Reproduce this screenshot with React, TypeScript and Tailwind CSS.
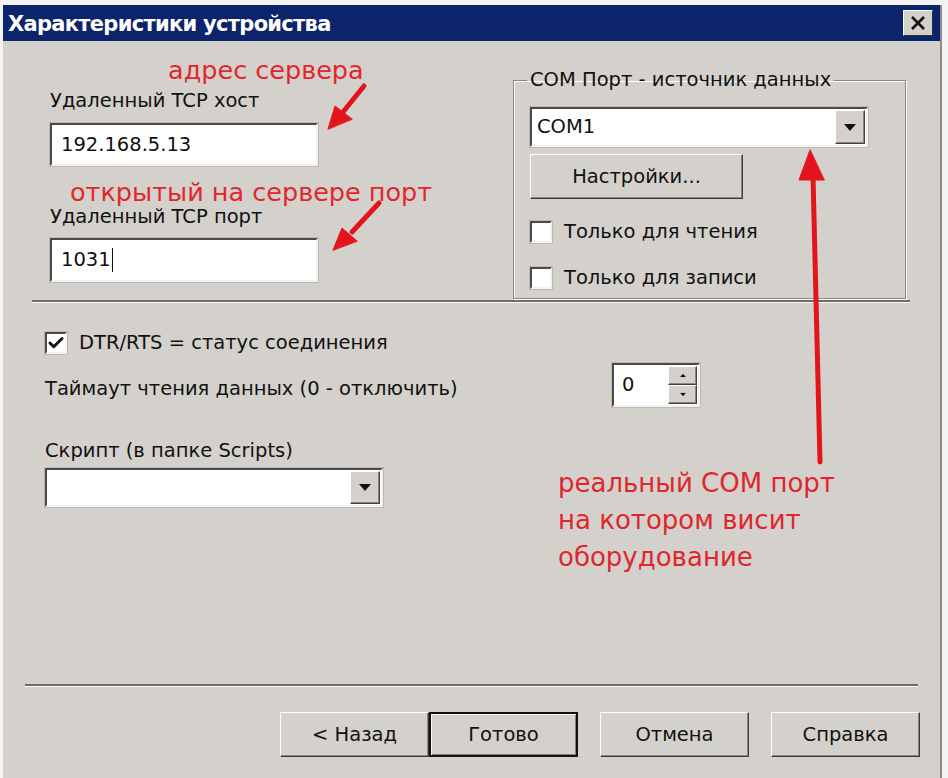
import { Check } from 'lucide-react'

const ui = { fontFamily: '"DejaVu Sans", Verdana, sans-serif' }

function Sunken({ className = '', children }: { className?: string; children?: React.ReactNode }) {
  return (
    <div
      className={`bg-white border-2 border-t-[#4a4a4a] border-l-[#4a4a4a] border-b-[#f2f2f2] border-r-[#f2f2f2] shadow-[0_0_0_1px_#bcb9b4] ${className}`}
    >
      {children}
    </div>
  )
}

function DropButton({ className = '' }: { className?: string }) {
  return (
    <div
      className={`bg-[#d4d1cc] border border-t-white border-l-white border-b-[#404040] border-r-[#404040] shadow-[inset_-1px_-1px_0_#8a8782] flex items-center justify-center ${className}`}
    >
      <svg width="12" height="7" viewBox="0 0 12 7">
        <path d="M0 0 H12 L6 7 Z" fill="#111" />
      </svg>
    </div>
  )
}

function Combo({ value, className = '' }: { value?: string; className?: string }) {
  return (
    <Sunken className={`flex items-stretch ${className}`}>
      <div className="flex-1 flex items-center pl-[5px] text-[19.5px] text-[#111]">{value}</div>
      <DropButton className="w-[30px] m-[1px]" />
    </Sunken>
  )
}

function Button({ label, focused = false, className = '' }: { label: string; focused?: boolean; className?: string }) {
  return (
    <div
      className={`bg-[#d4d1cc] flex items-center justify-center text-[19.5px] text-[#111] ${
        focused
          ? 'border-2 border-[#111] shadow-[inset_1px_1px_0_#fff,inset_-1px_-1px_0_#808080]'
          : 'border border-t-white border-l-white border-b-[#3a3a3a] border-r-[#3a3a3a] shadow-[inset_-1px_-1px_0_#8a8782]'
      } ${className}`}
    >
      {label}
    </div>
  )
}

function CheckBox({ checked = false, label }: { checked?: boolean; label: string }) {
  return (
    <div className="flex items-center h-[30px]">
      <Sunken className="w-[22px] h-[22px] flex items-center justify-center">
        {checked && <Check size={18} strokeWidth={4} className="text-[#111]" />}
      </Sunken>
      <span className="ml-[12px] text-[19.5px] text-[#111]">{label}</span>
    </div>
  )
}

function Separator({ className = '' }: { className?: string }) {
  return <div className={`h-[3px] border-t-2 border-[#6f6c68] border-b border-b-white ${className}`} />
}

export default function App() {
  return (
    <div className="w-[948px] h-[778px] bg-[#f4f3f1] pt-[5px] pl-[3px] overflow-hidden" style={ui}>
      <div className="relative w-[939px] h-[773px] bg-[#d4d1cc] flex flex-col border-r-2 border-[#8f8c88]">
        {/* Title bar */}
        <div className="h-[36px] bg-[#0c246b] flex items-center justify-between pl-[5px] pr-[7px]">
          <span className="pt-[3px] text-white font-bold text-[21px] tracking-[-0.7px]">Характеристики устройства</span>
          <div className="w-[30px] h-[26px] bg-[#d4d1cc] border border-t-white border-l-white border-b-[#303030] border-r-[#303030] flex items-center justify-center">
            <svg width="16" height="16" viewBox="0 0 16 16">
              <path d="M2 2 L14 14 M14 2 L2 14" stroke="#111" strokeWidth="2.6" />
            </svg>
          </div>
        </div>

        {/* Top section */}
        <div className="flex pl-[47px]">
          <div className="w-[268px] flex flex-col">
            <div className="mt-[11px] h-[36px] leading-[36px] ml-[118px] whitespace-nowrap text-[25.5px] text-[#e3262c]">
              адрес сервера
            </div>
            <div className="h-[26px] leading-[26px] text-[19.5px] text-[#111] whitespace-nowrap">Удаленный TCP хост</div>
            <Sunken className="mt-[9px] h-[43px] flex items-center pl-[9px] text-[19.5px] text-[#111]">192.168.5.13</Sunken>
            <div className="mt-[12px] h-[28px] leading-[28px] ml-[20px] whitespace-nowrap text-[25.5px] text-[#e3262c]">
              открытый на сервере порт
            </div>
            <div className="h-[22px] leading-[22px] text-[19.5px] text-[#111] whitespace-nowrap">Удаленный TCP порт</div>
            <Sunken className="mt-[10px] h-[44px] flex items-center pl-[9px] text-[19.5px] text-[#111]">
              1031<span className="ml-[1px] w-[1px] h-[24px] bg-[#111]" />
            </Sunken>
          </div>

          <fieldset className="ml-[195px] mt-[28px] w-[393px] h-[230px] border border-[#8a8782] shadow-[1px_1px_0_#fff,inset_1px_1px_0_#fff] px-[16px] pb-0">
            <legend className="ml-[-3px] px-[3px] h-[22px] leading-[22px] text-[19.5px] text-[#111]">COM Порт - источник данных</legend>
            <Combo value="COM1" className="mt-[16px] w-[338px] h-[40px]" />
            <Button label="Настройки..." className="mt-[7px] w-[213px] h-[45px]" />
            <div className="mt-[18px]">
              <CheckBox label="Только для чтения" />
            </div>
            <div className="mt-[16px]">
              <CheckBox label="Только для записи" />
            </div>
          </fieldset>
        </div>

        <Separator className="mt-[1px] ml-[29px] w-[878px]" />

        {/* Lower section */}
        <div className="pl-[42px] flex flex-col">
          <div className="mt-[25px]">
            <CheckBox checked label="DTR/RTS = статус соединения" />
          </div>
          <div className="mt-[5px] w-[655px] h-[44px] flex items-center justify-between">
            <span className="pt-[7px] text-[19.5px] text-[#111]">Таймаут чтения данных (0 - отключить)</span>
            <Sunken className="w-[88px] h-[44px] flex items-stretch">
              <div className="flex-1 flex items-center pl-[8px] text-[19.5px] text-[#111]">0</div>
              <div className="w-[29px] flex flex-col m-[1px]">
                <DropButton className="flex-1 [&_svg]:rotate-180 [&_svg]:scale-50" />
                <DropButton className="flex-1 [&_svg]:scale-50" />
              </div>
            </Sunken>
          </div>
          <div className="flex">
            <div className="w-[338px] flex flex-col">
              <div className="mt-[32px] h-[24px] leading-[24px] text-[19.5px] text-[#111]">Скрипт (в папке Scripts)</div>
              <Combo className="mt-[5px] h-[39px]" />
            </div>
            <div className="ml-[175px] mt-[58px] text-[26px] leading-[37px] text-[#e0262c]">
              <div>реальный COM порт</div>
              <div>на котором висит</div>
              <div>оборудование</div>
            </div>
          </div>
        </div>

        {/* Bottom */}
        <div className="mt-auto">
          <Separator className="ml-[22px] w-[893px]" />
          <div className="mt-[25px] mb-[21px] flex justify-end pr-[20px]">
            <Button label="< Назад" className="w-[149px] h-[45px]" />
            <Button label="Готово" focused className="w-[149px] h-[45px]" />
            <Button label="Отмена" className="ml-[22px] w-[149px] h-[45px]" />
            <Button label="Справка" className="ml-[22px] w-[149px] h-[45px]" />
          </div>
        </div>

        {/* Annotation arrows */}
        <svg className="absolute left-[-3px] top-[-5px] pointer-events-none" width="948" height="778" viewBox="0 0 948 778">
          <g fill="#e3141c" stroke="#e3141c" strokeLinecap="round">
            <line x1="364" y1="86" x2="343" y2="112" strokeWidth="5" />
            <path d="M328 129 L335 106 L352 119 Z" />
            <line x1="379" y1="203" x2="352" y2="232" strokeWidth="5" />
            <path d="M333 250 L342 228 L357 241 Z" />
            <line x1="820" y1="462" x2="813" y2="176" strokeWidth="5" />
            <path d="M810 150 L799 180 L824 180 Z" />
          </g>
        </svg>
      </div>
    </div>
  )
}
